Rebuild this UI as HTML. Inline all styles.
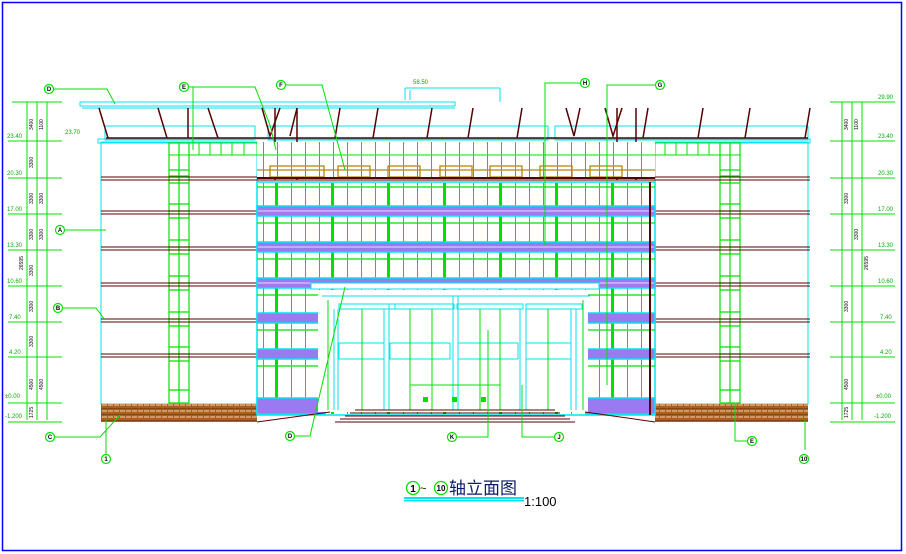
<!DOCTYPE html>
<html><head><meta charset="utf-8"><style>
html,body{margin:0;padding:0;background:#fff;}
svg{display:block;}
text{font-family:"Liberation Sans",sans-serif;}
</style></head><body>
<svg width="906" height="554" viewBox="0 0 906 554" xmlns="http://www.w3.org/2000/svg">
<defs>
<pattern id="brick" width="12" height="6" patternUnits="userSpaceOnUse">
<rect width="12" height="6" fill="#a8601a"/><line x1="0" y1="3" x2="12" y2="3" stroke="#fff" stroke-width="0.8" stroke-dasharray="5 1"/><line x1="0" y1="0" x2="12" y2="0" stroke="#5a1a00" stroke-width="0.8"/>
</pattern>
<pattern id="vgrid" width="14" height="400" patternUnits="userSpaceOnUse" x="263" y="0">
<line x1="0.5" y1="0" x2="0.5" y2="400" stroke="#00e000" stroke-width="1"/>
</pattern>
<pattern id="vgrid2" width="56" height="400" patternUnits="userSpaceOnUse" x="275" y="0">
<line x1="1" y1="0" x2="1" y2="400" stroke="#00e000" stroke-width="2"/>
</pattern>
</defs>
<rect x="2.5" y="2.5" width="899" height="548" fill="none" stroke="#0000ff" stroke-width="1.5"/>

<!-- roof canopy -->
<rect x="80" y="102" width="375" height="4" fill="none" stroke="#00e5ee" stroke-width="1"/>
<line x1="82" y1="108" x2="455" y2="108" stroke="#00e5ee"/>
<line x1="405" y1="100" x2="405" y2="88" stroke="#00e5ee"/><line x1="405" y1="88" x2="500" y2="88" stroke="#00e5ee"/><line x1="410" y1="100" x2="410" y2="90" stroke="#00e5ee"/><line x1="500" y1="88" x2="500" y2="102" stroke="#00e5ee"/>
<text x="413" y="84" font-size="6" fill="#00b000">58.50</text>
<g fill="none" stroke="#00e5ee" stroke-width="1">
<rect x="105" y="126" width="150" height="14"/><rect x="268" y="126" width="280" height="14"/><rect x="555" y="126" width="253" height="14"/>
</g>
<rect x="98" y="139" width="712" height="4" fill="none" stroke="#00e5ee"/>
<line x1="106" y1="138" x2="808" y2="138" stroke="#5a0000" stroke-width="1.5"/>
<g stroke="#5a0000" stroke-width="1.5" fill="none">
<path d="M99 108 L108 138"/><path d="M158 108 L167 138"/><path d="M208 108 L218 138"/><path d="M262 108 L270 136 L280 108"/><path d="M297 108 L290 136"/><path d="M340 108 L335 138"/><path d="M378 108 L373 138"/><path d="M432 108 L427 138"/><path d="M473 108 L468 138"/><path d="M522 108 L517 138"/><path d="M566 108 L574 136 L580 108"/><path d="M605 108 L613 136 L622 108"/><path d="M648 108 L643 138"/><path d="M703 108 L698 138"/><path d="M750 108 L745 138"/><path d="M810 108 L805 138"/>
<path d="M188 108 L188 138"/><path d="M275 108 L275 180"/><path d="M297 108 L297 180"/><path d="M617 108 L617 180"/><path d="M636 108 L636 180"/>
</g>

<rect x="101" y="142" width="156" height="262" fill="none" stroke="#00e5ee"/>
<rect x="655" y="142" width="153" height="262" fill="none" stroke="#00e5ee"/>
<g fill="none" stroke="#00e000">
<rect x="169" y="143" width="88" height="12"/><rect x="655" y="143" width="85" height="12"/>
<line x1="199" y1="143" x2="199" y2="155"/><line x1="210" y1="143" x2="210" y2="155"/><line x1="221" y1="143" x2="221" y2="155"/><line x1="232" y1="143" x2="232" y2="155"/><line x1="244" y1="143" x2="244" y2="155"/>
<line x1="665" y1="143" x2="665" y2="155"/><line x1="676" y1="143" x2="676" y2="155"/><line x1="687" y1="143" x2="687" y2="155"/><line x1="698" y1="143" x2="698" y2="155"/><line x1="709" y1="143" x2="709" y2="155"/>
</g>
<g fill="none" stroke="#00e000" stroke-width="1.2">
<rect x="169" y="143" width="20" height="260"/><line x1="179" y1="143" x2="179" y2="403"/>
<rect x="720" y="143" width="20" height="260"/><line x1="730" y1="143" x2="730" y2="403"/>
<path d="M169 170H189M169 176H189M169 183H189M169 204H189M169 211H189M169 218H189M169 240H189M169 247H189M169 254H189M169 276H189M169 283H189M169 290H189M169 312H189M169 319H189M169 326H189M169 347H189M169 354H189M169 361H189M169 390H189"/>
<path d="M720 170H740M720 176H740M720 183H740M720 204H740M720 211H740M720 218H740M720 240H740M720 247H740M720 254H740M720 276H740M720 283H740M720 290H740M720 312H740M720 319H740M720 326H740M720 347H740M720 354H740M720 361H740M720 390H740"/>
</g>
<g stroke="#5a0000" stroke-width="1">
<line x1="101" y1="177" x2="810" y2="177"/><line x1="101" y1="180" x2="810" y2="180"/>
<line x1="101" y1="211" x2="810" y2="211"/><line x1="101" y1="214" x2="810" y2="214"/>
<line x1="101" y1="247" x2="810" y2="247"/><line x1="101" y1="250" x2="810" y2="250"/>
<line x1="101" y1="283" x2="810" y2="283"/><line x1="101" y1="286" x2="810" y2="286"/>
<line x1="101" y1="319" x2="810" y2="319"/><line x1="101" y1="322" x2="810" y2="322"/>
<line x1="101" y1="354" x2="810" y2="354"/><line x1="101" y1="357" x2="810" y2="357"/>
</g>
<rect x="101" y="404" width="156" height="18" fill="url(#brick)"/>
<rect x="655" y="404" width="153" height="18" fill="url(#brick)"/>

<!-- center upper band -->
<rect x="257" y="142" width="398" height="36" fill="#fff"/>
<rect x="257" y="142" width="398" height="36" fill="url(#vgrid)"/>
<line x1="257" y1="155" x2="655" y2="155" stroke="#00e000"/>
<g fill="none" stroke="#b8860b" stroke-width="1.3">
<rect x="270" y="166" width="54" height="11"/><rect x="338" y="166" width="32" height="11"/><rect x="388" y="166" width="32" height="11"/><rect x="440" y="166" width="32" height="11"/><rect x="490" y="166" width="32" height="11"/><rect x="540" y="166" width="32" height="11"/><rect x="590" y="166" width="32" height="11"/>
<line x1="257" y1="170" x2="655" y2="170"/>
</g>
<line x1="257" y1="178" x2="655" y2="178" stroke="#5a0000" stroke-width="2"/>

<!-- center glass block -->
<rect x="257" y="182" width="398" height="233" fill="#fff" stroke="#00e5ee" stroke-width="1.5"/>
<rect x="258" y="183" width="396" height="231" fill="url(#vgrid)"/>
<rect x="258" y="183" width="396" height="231" fill="url(#vgrid2)"/>
<g stroke="#00e000" stroke-width="1.2">
<line x1="257" y1="187" x2="655" y2="187"/><line x1="257" y1="223" x2="655" y2="223"/><line x1="257" y1="259" x2="655" y2="259"/><line x1="257" y1="295" x2="655" y2="295"/><line x1="257" y1="330" x2="655" y2="330"/><line x1="257" y1="366" x2="655" y2="366"/>
</g>
<g fill="#9a7af0" stroke="#00e5ee" stroke-width="1.5">
<rect x="257" y="206" width="398" height="10"/><rect x="257" y="242" width="398" height="10"/><rect x="257" y="278" width="398" height="10"/>
<rect x="257" y="313" width="68" height="10"/><rect x="586" y="313" width="69" height="10"/>
<rect x="257" y="349" width="68" height="10"/><rect x="586" y="349" width="69" height="10"/>
<rect x="257" y="398" width="68" height="16"/><rect x="586" y="398" width="69" height="16"/>
</g>
<g stroke="#fff" stroke-width="0.8"><line x1="258" y1="211" x2="654" y2="211"/><line x1="258" y1="247" x2="654" y2="247"/><line x1="258" y1="283" x2="654" y2="283"/></g>
<line x1="650" y1="182" x2="650" y2="415" stroke="#5a0000" stroke-width="2"/>

<!-- entrance -->
<rect x="318" y="290" width="270" height="122" fill="#fff"/>
<rect x="311" y="283" width="288" height="6" fill="#fff" stroke="#00e5ee"/>
<g stroke="#00e5ee" fill="none" stroke-width="1">
<line x1="322" y1="296" x2="590" y2="296"/>
<rect x="339" y="304" width="56" height="5"/><rect x="389" y="304" width="65" height="5"/><rect x="457" y="304" width="66" height="5"/><rect x="526" y="304" width="56" height="5"/>
<rect x="339" y="343" width="45" height="16"/><rect x="390" y="343" width="60" height="16"/><rect x="458" y="343" width="60" height="16"/><rect x="526" y="343" width="45" height="16"/>
<line x1="334" y1="309" x2="334" y2="410"/><line x1="338" y1="309" x2="338" y2="410"/><line x1="384" y1="309" x2="384" y2="410"/><line x1="389" y1="309" x2="389" y2="410"/><line x1="453" y1="296" x2="453" y2="410"/><line x1="458" y1="296" x2="458" y2="410"/><line x1="520" y1="309" x2="520" y2="410"/><line x1="526" y1="309" x2="526" y2="410"/><line x1="571" y1="309" x2="571" y2="410"/><line x1="576" y1="309" x2="576" y2="410"/>
</g>
<g stroke="#00e000" stroke-width="1">
<line x1="328" y1="300" x2="328" y2="410"/><line x1="583" y1="300" x2="583" y2="410"/>
<line x1="362" y1="309" x2="362" y2="410"/><line x1="410" y1="309" x2="410" y2="410"/><line x1="432" y1="309" x2="432" y2="410"/><line x1="480" y1="309" x2="480" y2="410"/><line x1="500" y1="309" x2="500" y2="410"/><line x1="548" y1="309" x2="548" y2="410"/>
<line x1="410" y1="385" x2="500" y2="385"/>
</g>
<g fill="#00e000"><rect x="423" y="397" width="5" height="5"/><rect x="452" y="397" width="5" height="5"/><rect x="481" y="397" width="5" height="5"/></g>
<g stroke="#5a0000" stroke-width="1">
<line x1="355" y1="410" x2="555" y2="410"/><line x1="350" y1="413" x2="560" y2="413"/><line x1="345" y1="416" x2="565" y2="416"/><line x1="340" y1="419" x2="570" y2="419"/><line x1="335" y1="422" x2="575" y2="422"/>
<line x1="257" y1="422" x2="330" y2="412"/><line x1="585" y1="412" x2="655" y2="422"/>
</g>

<!-- dimensions -->
<g stroke="#00e000" stroke-width="1" fill="none">
<line x1="27" y1="102" x2="27" y2="420"/><line x1="37" y1="102" x2="37" y2="420"/><line x1="47" y1="102" x2="47" y2="420"/>
<line x1="12" y1="102" x2="62" y2="102"/><line x1="8" y1="141" x2="62" y2="141"/><line x1="8" y1="178" x2="62" y2="178"/><line x1="8" y1="214" x2="62" y2="214"/><line x1="8" y1="250" x2="62" y2="250"/><line x1="8" y1="286" x2="62" y2="286"/><line x1="8" y1="322" x2="62" y2="322"/><line x1="8" y1="357" x2="62" y2="357"/><line x1="8" y1="403" x2="62" y2="403"/><line x1="8" y1="422" x2="62" y2="422"/>
<line x1="842" y1="102" x2="842" y2="420"/><line x1="852" y1="102" x2="852" y2="420"/><line x1="862" y1="102" x2="862" y2="420"/>
<line x1="830" y1="102" x2="895" y2="102"/><line x1="830" y1="141" x2="895" y2="141"/><line x1="830" y1="178" x2="895" y2="178"/><line x1="830" y1="214" x2="895" y2="214"/><line x1="830" y1="250" x2="895" y2="250"/><line x1="830" y1="286" x2="895" y2="286"/><line x1="830" y1="322" x2="895" y2="322"/><line x1="830" y1="357" x2="895" y2="357"/><line x1="830" y1="403" x2="895" y2="403"/><line x1="830" y1="422" x2="895" y2="422"/>
</g>
<g font-size="6" fill="#00b000">
<text x="7" y="138">23.40</text><text x="7" y="175">20.30</text><text x="7" y="211">17.00</text><text x="7" y="247">13.30</text><text x="7" y="283">10.60</text><text x="9" y="319">7.40</text><text x="9" y="354">4.20</text><text x="5" y="398">±0.00</text><text x="5" y="418">-1.200</text>
<text x="65" y="134">23.70</text>
<text x="878" y="99">29.90</text><text x="878" y="138">23.40</text><text x="878" y="175">20.30</text><text x="878" y="211">17.00</text><text x="878" y="247">13.30</text><text x="878" y="283">10.60</text><text x="880" y="319">7.40</text><text x="880" y="354">4.20</text><text x="876" y="398">±0.00</text><text x="874" y="418">-1.200</text>
</g>
<g font-size="5" fill="#000">
<text transform="translate(33,130) rotate(-90)">3400</text><text transform="translate(43,130) rotate(-90)">1100</text><text transform="translate(33,168) rotate(-90)">3300</text><text transform="translate(33,204) rotate(-90)">3300</text><text transform="translate(43,204) rotate(-90)">3300</text><text transform="translate(33,240) rotate(-90)">3300</text><text transform="translate(43,240) rotate(-90)">3300</text><text transform="translate(23,270) rotate(-90)">26595</text><text transform="translate(33,276) rotate(-90)">3300</text><text transform="translate(33,312) rotate(-90)">3300</text><text transform="translate(33,347) rotate(-90)">3300</text><text transform="translate(33,390) rotate(-90)">4500</text><text transform="translate(43,390) rotate(-90)">4500</text><text transform="translate(33,418) rotate(-90)">1725</text>
<text transform="translate(848,130) rotate(-90)">3400</text><text transform="translate(858,130) rotate(-90)">1100</text><text transform="translate(848,204) rotate(-90)">3300</text><text transform="translate(858,240) rotate(-90)">3300</text><text transform="translate(868,270) rotate(-90)">26595</text><text transform="translate(848,312) rotate(-90)">3300</text><text transform="translate(848,390) rotate(-90)">4500</text><text transform="translate(848,418) rotate(-90)">1725</text>
</g>

<g stroke="#00e000" fill="none" stroke-width="1">
<path d="M53 89 L107 89 L115 104"/><path d="M186 87 L193 87 L193 150"/><path d="M193 87 L255 87 L270 125 L276 150"/><path d="M282 85 L322 85 L345 170"/><path d="M583 83 L545 83 L545 245"/><path d="M656 85 L607 85 L607 385"/>
<path d="M64 230 L106 230"/><path d="M63 308 L96 308 L105 320"/><path d="M54 437 L100 437 L120 415"/><path d="M295 436 L310 436 L345 287"/><path d="M456 437 L488 437 L488 330"/><path d="M555 437 L522 437 L522 385"/><path d="M750 441 L735 441 L735 404"/><path d="M805 450 L805 420"/><path d="M106 455 L106 420"/>
</g>
<g stroke="#00e000" fill="#fff" stroke-width="1.2">
<circle cx="49" cy="89" r="4.5"/><circle cx="184" cy="87" r="4.5"/><circle cx="281" cy="85" r="4.5"/><circle cx="585" cy="83" r="4.5"/><circle cx="660" cy="85" r="4.5"/><circle cx="60" cy="230" r="4.5"/><circle cx="58" cy="308" r="4.5"/><circle cx="50" cy="437" r="4.5"/><circle cx="106" cy="459" r="4.5"/><circle cx="290" cy="436" r="4.5"/><circle cx="452" cy="437" r="4.5"/><circle cx="559" cy="437" r="4.5"/><circle cx="752" cy="441" r="4.5"/><circle cx="804" cy="459" r="4.5"/>
</g>
<g font-size="6" fill="#000" text-anchor="middle" font-weight="bold">
<text x="49" y="91">D</text><text x="184" y="89">E</text><text x="281" y="87">F</text><text x="585" y="85">H</text><text x="660" y="87">G</text><text x="60" y="232">A</text><text x="58" y="310">B</text><text x="50" y="439">C</text><text x="106" y="461">1</text><text x="290" y="438">D</text><text x="452" y="439">K</text><text x="559" y="439">J</text><text x="752" y="443">E</text><text x="804" y="461">10</text>
</g>

<circle cx="413" cy="488" r="6.5" fill="#fff" stroke="#00e000" stroke-width="1.3"/>
<text x="413" y="492" font-size="10" font-weight="bold" text-anchor="middle" fill="#000">1</text>
<text x="420" y="492" font-size="11" fill="#000">~</text>
<circle cx="441" cy="488" r="6.5" fill="#fff" stroke="#00e000" stroke-width="1.3"/>
<text x="441" y="491" font-size="8" font-weight="bold" text-anchor="middle" fill="#000">10</text>
<text x="449" y="494" font-size="17" fill="#0a1a6a" font-family="'Liberation Sans','Noto Sans CJK SC',sans-serif">轴立面图</text>
<rect x="404" y="497" width="120" height="2" fill="#00e5ee"/><rect x="404" y="500" width="120" height="1.5" fill="#00e5ee"/>
<text x="524" y="506" font-size="13" fill="#000" font-family="'Liberation Serif',serif">1:100</text>
</svg>
</body></html>
